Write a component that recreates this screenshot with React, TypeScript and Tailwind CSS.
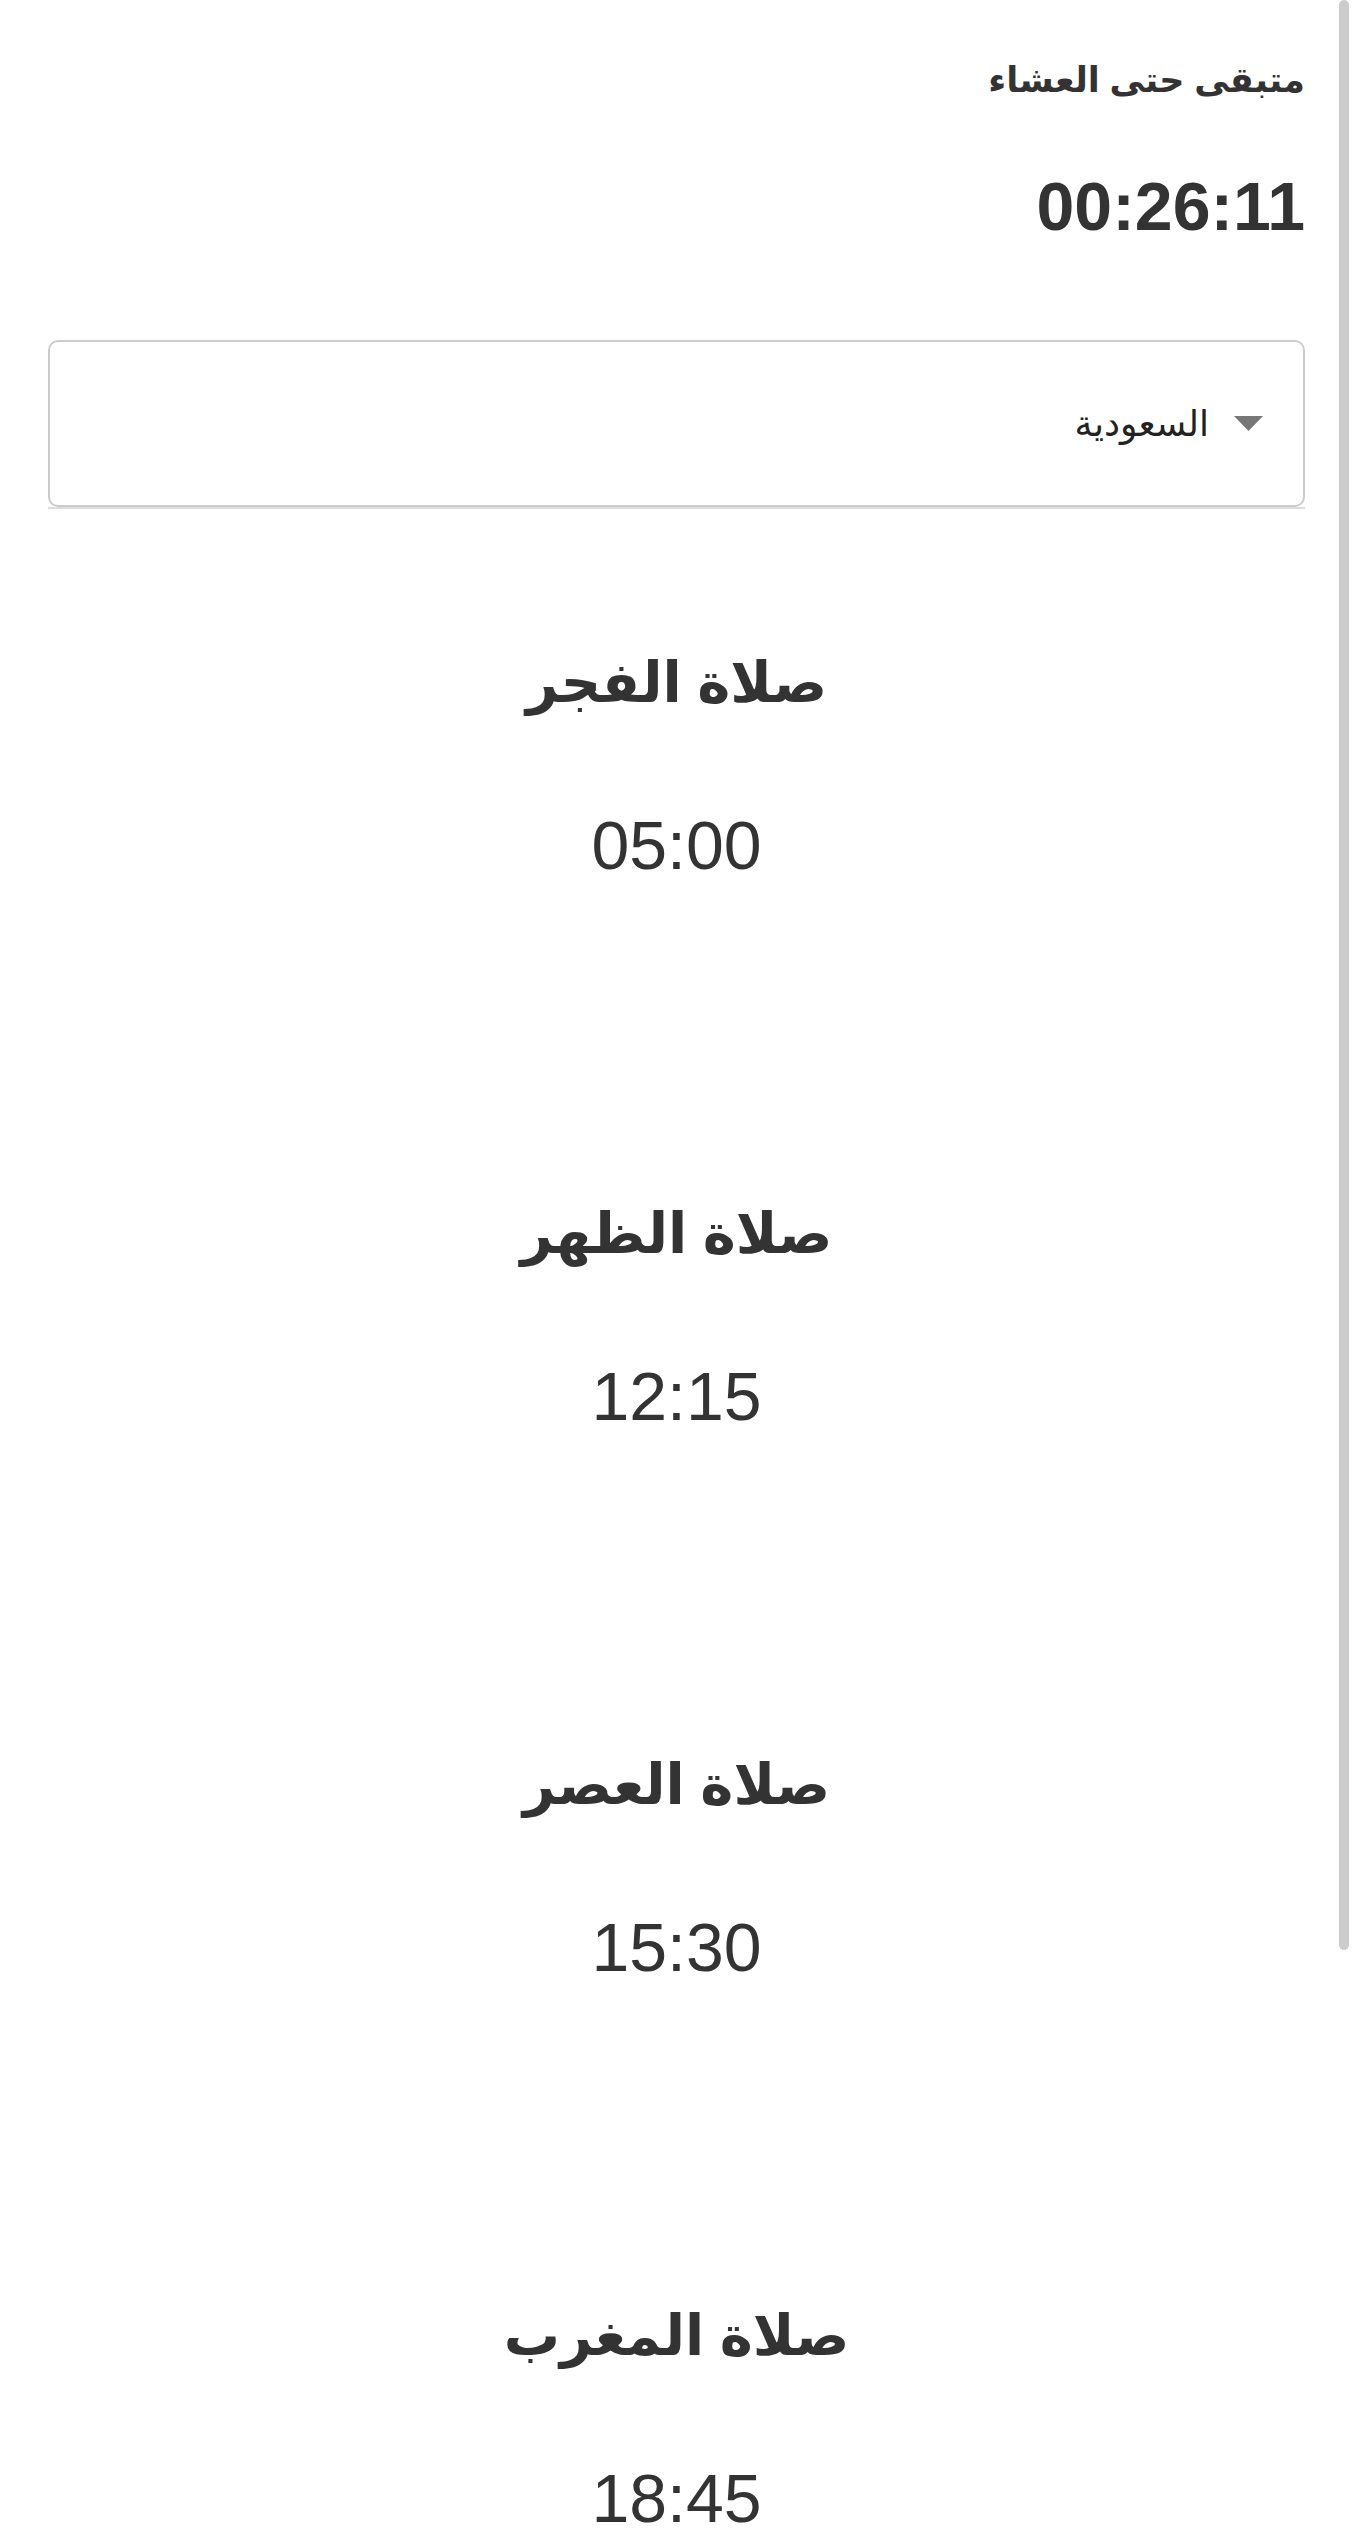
import React from "react";

const prayers = [
  { name: "صلاة الفجر", time: "05:00" },
  { name: "صلاة الظهر", time: "12:15" },
  { name: "صلاة العصر", time: "15:30" },
  { name: "صلاة المغرب", time: "18:45" },
];

export default function App() {
  return (
    <div
      dir="rtl"
      className="relative h-[2535px] overflow-hidden bg-white text-[#333] font-['Liberation_Sans','DejaVu_Sans',sans-serif]"
    >
      <div className="px-[48px]">
        <div className="pt-[56px] text-[35px] font-bold leading-[48px]">متبقى حتى العشاء</div>
        <div className="mt-[68px] text-[68px] font-bold leading-none">00:26:11</div>
        <div className="mt-[100px] border-b-2 border-[#ddd]">
          <div className="flex h-[167px] items-center rounded-[10px] border-2 border-[#ccc] pr-[40px]">
            <svg width="29" height="15" viewBox="0 0 29 15" className="shrink-0">
              <polygon points="0,0 29,0 14.5,15" fill="#777" />
            </svg>
            <span className="mr-[25px] text-[36px] text-[#222]">السعودية</span>
          </div>
        </div>
        <div className="flex flex-col gap-[315px] pt-[134px]">
          {prayers.map((p) => (
            <div key={p.time} className="flex flex-col items-center">
              <div className="text-[56px] font-bold leading-[80px]">{p.name}</div>
              <div className="mt-[88px] text-[68px] leading-none">{p.time}</div>
            </div>
          ))}
        </div>
      </div>
      <div className="absolute right-[4px] top-0 h-[1950px] w-[10px] rounded-full bg-[#ccc]" />
    </div>
  );
}
